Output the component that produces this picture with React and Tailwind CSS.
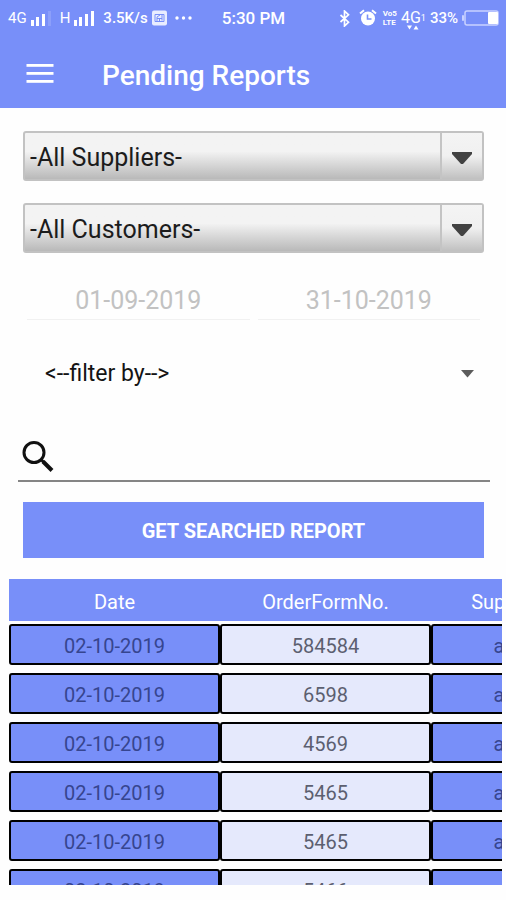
import React from "react";

const columns = ["Date", "OrderFormNo.", "Supplier Name"];

const orders = [
  { date: "02-10-2019", orderNo: "584584", supplier: "a b textile" },
  { date: "02-10-2019", orderNo: "6598", supplier: "a b textile" },
  { date: "02-10-2019", orderNo: "4569", supplier: "a b textile" },
  { date: "02-10-2019", orderNo: "5465", supplier: "a b textile" },
  { date: "02-10-2019", orderNo: "5465", supplier: "a b textile" },
  { date: "02-10-2019", orderNo: "5466", supplier: "a b textile" },
];

const SignalIcon = ({ weak }) => (
  <svg width="21" height="17" viewBox="0 0 21 17" fill="#fff" aria-hidden="true">
    <rect x="0" y="10" width="3" height="6" />
    <rect x="5" y="7" width="3" height="9" />
    <rect x="11" y="4" width="3" height="12" />
    <rect x="17" y="1" width="3" height="15" opacity={weak ? 0.15 : 1} />
  </svg>
);

const SimIcon = () => (
  <svg width="15" height="16" viewBox="0 0 15 16" aria-hidden="true">
    <rect x="0" y="0.5" width="15" height="15" rx="2" fill="#e9edff" />
    <path
      d="M3 4.5h9v7H3zM5 11V7l3-2M7.5 11V8M10 5v5.5M5 8.5h5"
      fill="none"
      stroke="#788ff9"
      strokeWidth="1"
    />
  </svg>
);

const BluetoothIcon = () => (
  <svg width="12" height="17" viewBox="0 0 12 17" aria-hidden="true">
    <path
      d="M1.5 5l8 7.2L5.5 16V1l4 3.8-8 7.2"
      fill="none"
      stroke="#fff"
      strokeWidth="1.7"
    />
  </svg>
);

const AlarmIcon = () => (
  <svg width="18" height="18" viewBox="0 0 18 18" aria-hidden="true">
    <path d="M1 4.5L5 1.2M17 4.5L13 1.2" stroke="#fff" strokeWidth="2" />
    <circle cx="9" cy="9.5" r="7" fill="#fff" />
    <path d="M8.5 5.5v4.5h4" fill="none" stroke="#788ff9" strokeWidth="1.6" />
  </svg>
);

const DataArrows = () => (
  <svg width="12" height="5" viewBox="0 0 12 5" fill="#fff" aria-hidden="true">
    <path d="M0 0.5h5L2.5 4.5zM6.5 4.5h5L9 0.5z" />
  </svg>
);

const BatteryIcon = () => (
  <svg width="37" height="16" viewBox="0 0 37 16" aria-hidden="true">
    <rect x="3" y="1" width="33" height="14" rx="2" fill="none" stroke="#c9d2ff" strokeWidth="1.5" />
    <rect x="0" y="5" width="2" height="6" rx="1" fill="#c9d2ff" />
    <rect x="26" y="2" width="10" height="12" rx="1" fill="#fff" />
  </svg>
);

const StatusBar = () => (
  <div className="flex h-9 items-center pl-2 pr-[7px] text-[15px] leading-5">
    <div className="flex flex-1 items-center">
      <span className="mr-1">4G</span>
      <SignalIcon weak />
      <span className="ml-2 mr-1">H</span>
      <SignalIcon />
      <span className="ml-2 mr-1 font-medium">3.5K/s</span>
      <SimIcon />
      <svg className="ml-2" width="17" height="4" viewBox="0 0 17 4" fill="#fff" aria-hidden="true">
        <circle cx="2" cy="2" r="1.7" />
        <circle cx="8.5" cy="2" r="1.7" />
        <circle cx="15" cy="2" r="1.7" />
      </svg>
    </div>
    <span className="text-[17px] font-medium">5:30 PM</span>
    <div className="flex flex-1 items-center justify-end">
      <BluetoothIcon />
      <span className="ml-2 mr-1.5">
        <AlarmIcon />
      </span>
      <span className="flex flex-col text-[8px] font-bold leading-[9px]">
        <span>Vo5</span>
        <span>LTE</span>
      </span>
      <span className="relative ml-1 flex items-center">
        <span className="text-base leading-5">4G</span>
        <span className="text-[9px]">1</span>
        <span className="absolute -bottom-0.5 left-1.5 flex">
          <DataArrows />
        </span>
      </span>
      <span className="ml-1 mr-1 font-medium">33%</span>
      <BatteryIcon />
    </div>
  </div>
);

const Header = () => (
  <header className="h-[108px] shrink-0 bg-[#788ff9] text-white">
    <StatusBar />
    <div className="flex h-[72px] items-center px-[26px] pt-1">
      <button type="button" aria-label="Menu">
        <svg width="28" height="20" viewBox="0 0 28 20" fill="#fff" aria-hidden="true">
          <rect x="0.5" y="0" width="27" height="2.8" />
          <rect x="0.5" y="8" width="27" height="2.8" />
          <rect x="0.5" y="16" width="27" height="2.8" />
        </svg>
      </button>
      <h1 className="ml-12 pt-1 text-[28px] font-medium leading-8">Pending Reports</h1>
    </div>
  </header>
);

const GlossySelect = ({ label }) => (
  <div className="relative">
    <select
      aria-label={label}
      className="h-[50px] w-full appearance-none rounded-[3px] border-2 border-[#c2c2c2] bg-linear-to-b from-[#f3f3f3] via-[#f3f3f3] via-40% to-[#b9b9b9] pl-[5px] pt-1 text-[25px] text-[#1c1c1c]"
    >
      <option>{label}</option>
    </select>
    <span className="pointer-events-none absolute inset-y-0.5 right-0.5 flex w-[42px] items-center justify-center border-l-2 border-[#c4c4c4] bg-linear-to-b from-[#f4f4f4] via-[#f0f0f0] to-[#c0c0c0] pt-1">
      <svg width="20" height="12" viewBox="0 0 20 12" aria-hidden="true">
        <path d="M0 0h20v2L11 12H9L0 2z" fill="#424242" />
      </svg>
    </span>
  </div>
);

const DateField = ({ label, value }) => (
  <input
    type="text"
    readOnly
    aria-label={label}
    value={value}
    className="h-10 w-full min-w-0 border-b border-[#f1f1f1] pt-0.5 text-center text-[25px] text-[#c2c2c2] outline-none"
  />
);

const Filters = () => (
  <form className="shrink-0" onSubmit={(e) => e.preventDefault()}>
    <div className="ml-[23px] mr-[22px] mt-[23px] flex flex-col gap-[22px]">
      <GlossySelect label="-All Suppliers-" />
      <GlossySelect label="-All Customers-" />
    </div>

    <div className="ml-[27px] mr-[26px] mt-[27px] grid grid-cols-2 gap-2">
      <DateField label="From date" value="01-09-2019" />
      <DateField label="To date" value="31-10-2019" />
    </div>

    <div className="relative ml-[27px] mr-[26px] mt-[30px]">
      <select
        aria-label="Filter by"
        className="h-12 w-full appearance-none bg-transparent pl-[18px] text-[23px] text-[#141414]"
      >
        <option>{"<--filter by-->"}</option>
      </select>
      <svg
        className="pointer-events-none absolute right-1.5 top-5"
        width="13"
        height="8"
        viewBox="0 0 13 8"
        aria-hidden="true"
      >
        <path d="M0 0h13L6.5 7.5z" fill="#5c5c5c" />
      </svg>
    </div>

    <label className="ml-[18px] mr-4 mt-[34px] flex h-[50px] items-center border-b-2 border-[#858585] pl-1">
      <svg width="33" height="33" viewBox="0 0 33 33" fill="none" stroke="#111" aria-hidden="true">
        <circle cx="12" cy="12.5" r="10" strokeWidth="3" />
        <path d="M19 19.5l3 3" strokeWidth="3" />
        <path d="M21 21.5l9 9" strokeWidth="4" />
      </svg>
      <input type="text" aria-label="Search" className="ml-2 min-w-0 flex-1 text-[23px] outline-none" />
    </label>

    <div className="ml-[23px] mr-[22px] mt-5">
      <button type="submit" className="h-14 w-full bg-[#788ff9] pt-0.5 text-xl font-bold text-white">
        GET SEARCHED REPORT
      </button>
    </div>
  </form>
);

const Cell = ({ tinted, children }) => (
  <td className="p-0 pt-[3px] pb-[5px]">
    <div
      className={
        tinted
          ? "h-[41px] rounded-[3px] border-2 border-black bg-[#e5e9fc] text-center leading-10 text-[#5c5f70]"
          : "h-[41px] rounded-[3px] border-2 border-black bg-[#788ff9] text-center leading-10 text-[#36458f]"
      }
    >
      {children}
    </div>
  </td>
);

const ReportTable = () => (
  <div className="mb-[15px] ml-[9px] mr-1 mt-[21px] min-h-0 flex-1 overflow-auto [scrollbar-width:none]">
    <table className="w-[633px] table-fixed border-separate border-spacing-0 text-xl">
      <thead>
        <tr className="h-[42px] bg-[#788ff9] text-white">
          {columns.map((name) => (
            <th key={name} className="p-0 pt-1 font-normal">
              {name}
            </th>
          ))}
        </tr>
      </thead>
      <tbody>
        {orders.map((order, i) => (
          <tr key={i}>
            <Cell>{order.date}</Cell>
            <Cell tinted>{order.orderNo}</Cell>
            <Cell>{order.supplier}</Cell>
          </tr>
        ))}
      </tbody>
    </table>
  </div>
);

const App = () => (
  <div className="flex h-screen flex-col bg-[#fefefe] font-['Roboto',sans-serif]">
    <Header />
    <Filters />
    <ReportTable />
  </div>
);

export default App;
